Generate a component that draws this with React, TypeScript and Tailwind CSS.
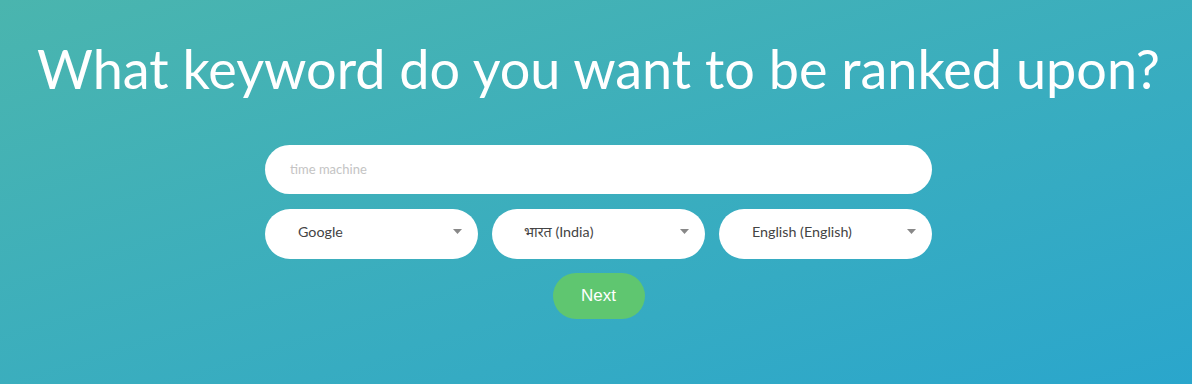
import React from "react";

function Caret() {
  return (
    <svg width="9" height="5" viewBox="0 0 9 5" className="shrink-0">
      <path d="M0 0 L9 0 L4.5 5 Z" fill="#888" />
    </svg>
  );
}

function Select({ label, pl }: { label: string; pl: string }) {
  return (
    <div className={`flex h-[50px] w-[213px] items-center justify-between rounded-full bg-white ${pl} pr-[16px] pb-[5px]`}>
      <span className="text-[14.3px] text-[#444]">{label}</span>
      <Caret />
    </div>
  );
}

export default function App() {
  return (
    <div
      className="flex h-[384px] w-[1192px] flex-col items-center bg-gradient-to-br from-[#4ab5ae] to-[#2aa6cc] pl-[5px]"
      style={{ fontFamily: "Lato, 'Noto Sans', sans-serif" }}
    >
      <h1 className="mt-[36px] whitespace-nowrap text-[54px] font-normal leading-[66px] text-white">
        What keyword do you want to be ranked upon?
      </h1>
      <div className="mt-[43px] flex h-[49px] w-[667px] items-center rounded-full bg-white pl-[25px]">
        <span className="text-[13px] text-[#c4c4c4]">time machine</span>
      </div>
      <div className="mt-[15px] flex w-[667px] gap-[14px]">
        <Select label="Google" pl="pl-[33px]" />
        <Select label="भारत (India)" pl="pl-[32px]" />
        <Select label="English (English)" pl="pl-[33px]" />
      </div>
      <button
        className="mt-[14px] flex h-[46px] w-[92px] items-center justify-center rounded-full bg-[#5fc670] text-[17px] text-white"
        style={{ fontFamily: "'Liberation Sans', Arial, sans-serif" }}
      >
        Next
      </button>
    </div>
  );
}
